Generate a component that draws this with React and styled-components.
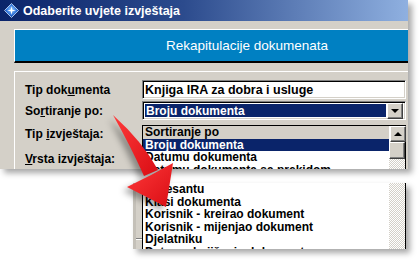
import React from "react";
import styled, { createGlobalStyle, css } from "styled-components";

const GlobalStyle = createGlobalStyle`
  html, body { margin: 0; padding: 0; background: #fff; }
  body { font-family: "Liberation Sans", Arial, sans-serif; }
`;

const FONT = `"Liberation Sans", Arial, sans-serif`;

const Page = styled.div`
  position: relative;
  width: 419px;
  height: 261px;
  overflow: hidden;
  background: #fff;
`;

const WindowShot = styled.div`
  width: 408px;
  height: 169px;
  overflow: hidden;
  background: #d4d0c8;
  box-shadow: 4px 4px 6px rgba(0, 0, 0, 0.35);
`;

const TitleBar = styled.div`
  height: 21px;
  display: flex;
  align-items: center;
  gap: 4px;
  padding-left: 4px;
  background: linear-gradient(to right, #0a246a 0%, #2c4b8d 45%, #8fb0e0 100%);
  color: #fff;
  font: bold 12.5px ${FONT};
  white-space: nowrap;
`;

const Banner = styled.div`
  margin: 8px 0 0 14px;
  height: 31px;
  border-top: 1px solid #fff;
  border-left: 1px solid #fff;
  border-bottom: 2px solid #000;
  background: #0080c2;
  color: #fff;
  display: flex;
  align-items: center;
  padding-left: 151px;
  font: 13.5px ${FONT};
  white-space: nowrap;
`;

const Panel = styled.div`
  position: relative;
  margin: 8px 0 0 14px;
  border-top: 1px solid #fff;
  border-left: 1px solid #fff;
  padding: 8px 0 0 10px;
  height: 200px;
`;

const Row = styled.div`
  display: grid;
  grid-template-columns: 117px 264px;
  align-items: center;
  height: 19px;
  margin-top: ${(p) => p.$gap || 0}px;
`;

const Label = styled.div`
  font: bold 12px ${FONT};
  color: #000;
  white-space: nowrap;
  u { text-decoration: underline; }
`;

const Field = styled.div`
  box-sizing: border-box;
  height: 19px;
  display: flex;
  align-items: center;
  padding: 2px;
  border-top: 1px solid #808080;
  border-left: 1px solid #808080;
  border-right: 1px solid #fff;
  border-bottom: 1px solid #fff;
  box-shadow: inset 1px 1px 0 #000, inset -1px -1px 0 #d4d0c8;
  background: #fff;
  font: bold 12.5px ${FONT};
  color: #000;
  white-space: nowrap;
`;

const SelectValue = styled.div`
  flex: 1;
  height: 100%;
  display: flex;
  align-items: center;
  padding-left: 1px;
  background: #0a246a;
  color: #fff;
  font-size: 12px;
`;

const raised = css`
  box-sizing: border-box;
  background: #d4d0c8;
  border-top: 1px solid #fff;
  border-left: 1px solid #fff;
  border-right: 1px solid #404040;
  border-bottom: 1px solid #404040;
  box-shadow: inset -1px -1px 0 #808080;
`;

const ArrowButton = styled.div`
  ${raised};
  width: 16px;
  height: 16px;
  margin-left: 1px;
  display: flex;
  align-items: center;
  justify-content: center;
  &::after {
    content: "";
    width: 0;
    height: 0;
    border-left: 4px solid transparent;
    border-right: 4px solid transparent;
    ${(p) =>
      p.$up
        ? "border-bottom: 4px solid #000; margin-bottom: 1px;"
        : "border-top: 4px solid #000; margin-top: 1px;"}
  }
`;

const DropList = styled.div`
  position: absolute;
  left: 127px;
  top: 53px;
  width: 264px;
  height: 120px;
  box-sizing: border-box;
  display: flex;
  border: 1px solid #000;
  background: #fff;
`;

const Items = styled.div`
  flex: 1;
  display: flex;
  flex-direction: column;
  overflow: hidden;
`;

const Item = styled.div`
  flex: none;
  height: 12.5px;
  padding-left: 2px;
  font: bold 12px/12.5px ${FONT};
  white-space: nowrap;
  color: ${(p) => (p.$selected ? "#fff" : "#000")};
  background: ${(p) => (p.$selected ? "#0a246a" : p.$header ? "#d4d0c8" : "transparent")};
`;

const ScrollBar = styled.div`
  width: 16px;
  display: flex;
  flex-direction: column;
`;

const Thumb = styled.div`
  ${raised};
  width: 16px;
  height: 17px;
`;

const Track = styled.div`
  flex: 1;
  background: repeating-conic-gradient(#d4d0c8 0 25%, #fff 0 50%) 0 0 / 2px 2px;
`;

const CutPiece = styled.div`
  margin: 14px 0 0 133px;
  width: 273px;
  height: 66px;
  display: flex;
  overflow: hidden;
  background: #d4d0c8;
  box-shadow: 4px 4px 6px rgba(0, 0, 0, 0.35);
`;

const Strip = styled.div`
  width: 9px;
  padding-top: 55px;
  border-left: 3px solid #c4c0b8;
  box-sizing: border-box;
`;

const Groove = styled.div`
  height: 0;
  border-top: 1px solid #808080;
  border-bottom: 1px solid #fff;
`;

const ListBox = styled.div`
  flex: 1;
  display: flex;
  border-left: 1px solid #000;
  border-right: 1px solid #000;
  background: #fff;
`;

const ArrowLayer = styled.svg`
  position: absolute;
  left: 0;
  top: 0;
  pointer-events: none;
  filter: drop-shadow(-4px 4px 3px rgba(0, 0, 0, 0.35));
`;

function AppIcon() {
  return (
    <svg width="15" height="15" viewBox="0 0 15 15">
      <defs>
        <radialGradient id="ig" cx="50%" cy="45%" r="60%">
          <stop offset="0%" stopColor="#9fd0ff" />
          <stop offset="60%" stopColor="#2b6fd6" />
          <stop offset="100%" stopColor="#0b2f8a" />
        </radialGradient>
      </defs>
      <path d="M7.5 0.5 L14.5 7.5 L7.5 14.5 L0.5 7.5 Z" fill="url(#ig)" stroke="#cfe4ff" strokeWidth="0.8" />
      <path d="M7.5 3 L8.3 6.7 L12 7.5 L8.3 8.3 L7.5 12 L6.7 8.3 L3 7.5 L6.7 6.7 Z" fill="#fff" />
    </svg>
  );
}

export default function App() {
  return (
    <>
      <GlobalStyle />
      <Page>
        <WindowShot>
          <TitleBar>
            <AppIcon />
            <span>Odaberite uvjete izvještaja</span>
          </TitleBar>
          <Banner>Rekapitulacije dokumenata</Banner>
          <Panel>
            <Row>
              <Label>Tip dok<u>u</u>menta</Label>
              <Field>Knjiga IRA za dobra i usluge</Field>
            </Row>
            <Row $gap={2}>
              <Label>So<u>r</u>tiranje po:</Label>
              <Field>
                <SelectValue>Broju dokumenta</SelectValue>
                <ArrowButton />
              </Field>
            </Row>
            <Row $gap={4}>
              <Label>Tip <u>i</u>zvještaja:</Label>
            </Row>
            <Row $gap={6}>
              <Label><u>V</u>rsta izvještaja:</Label>
            </Row>
            <DropList>
              <Items>
                <Item $header>Sortiranje po</Item>
                <Item $selected>Broju dokumenta</Item>
                <Item>Datumu dokumenta</Item>
                <Item>Datumu dokumenta sa prekidom</Item>
              </Items>
              <ScrollBar>
                <ArrowButton $up />
                <Thumb />
                <Track />
              </ScrollBar>
            </DropList>
          </Panel>
        </WindowShot>

        <CutPiece>
          <Strip>
            <Groove />
          </Strip>
          <ListBox>
            <Items>
              <Item>Adresantu</Item>
              <Item>Klasi dokumenta</Item>
              <Item>Korisnik - kreirao dokument</Item>
              <Item>Korisnik - mijenjao dokument</Item>
              <Item>Djelatniku</Item>
              <Item>Datumu knjiženja dokumenta</Item>
            </Items>
            <ScrollBar>
              <Track />
            </ScrollBar>
          </ListBox>
        </CutPiece>

        <ArrowLayer width="419" height="261" viewBox="0 0 419 261">
          <defs>
            <linearGradient id="ag" x1="0" y1="0" x2="1" y2="1">
              <stop offset="0%" stopColor="#ff3a3a" />
              <stop offset="100%" stopColor="#d90d14" />
            </linearGradient>
          </defs>
          <path d="M113 115 Q143 142 158 170 L144 176 Q131 147 113 115 Z" fill="url(#ag)" />
          <path d="M166 207 L173 163 L151 175 L127 187 Z" fill="url(#ag)" />
        </ArrowLayer>
      </Page>
    </>
  );
}
